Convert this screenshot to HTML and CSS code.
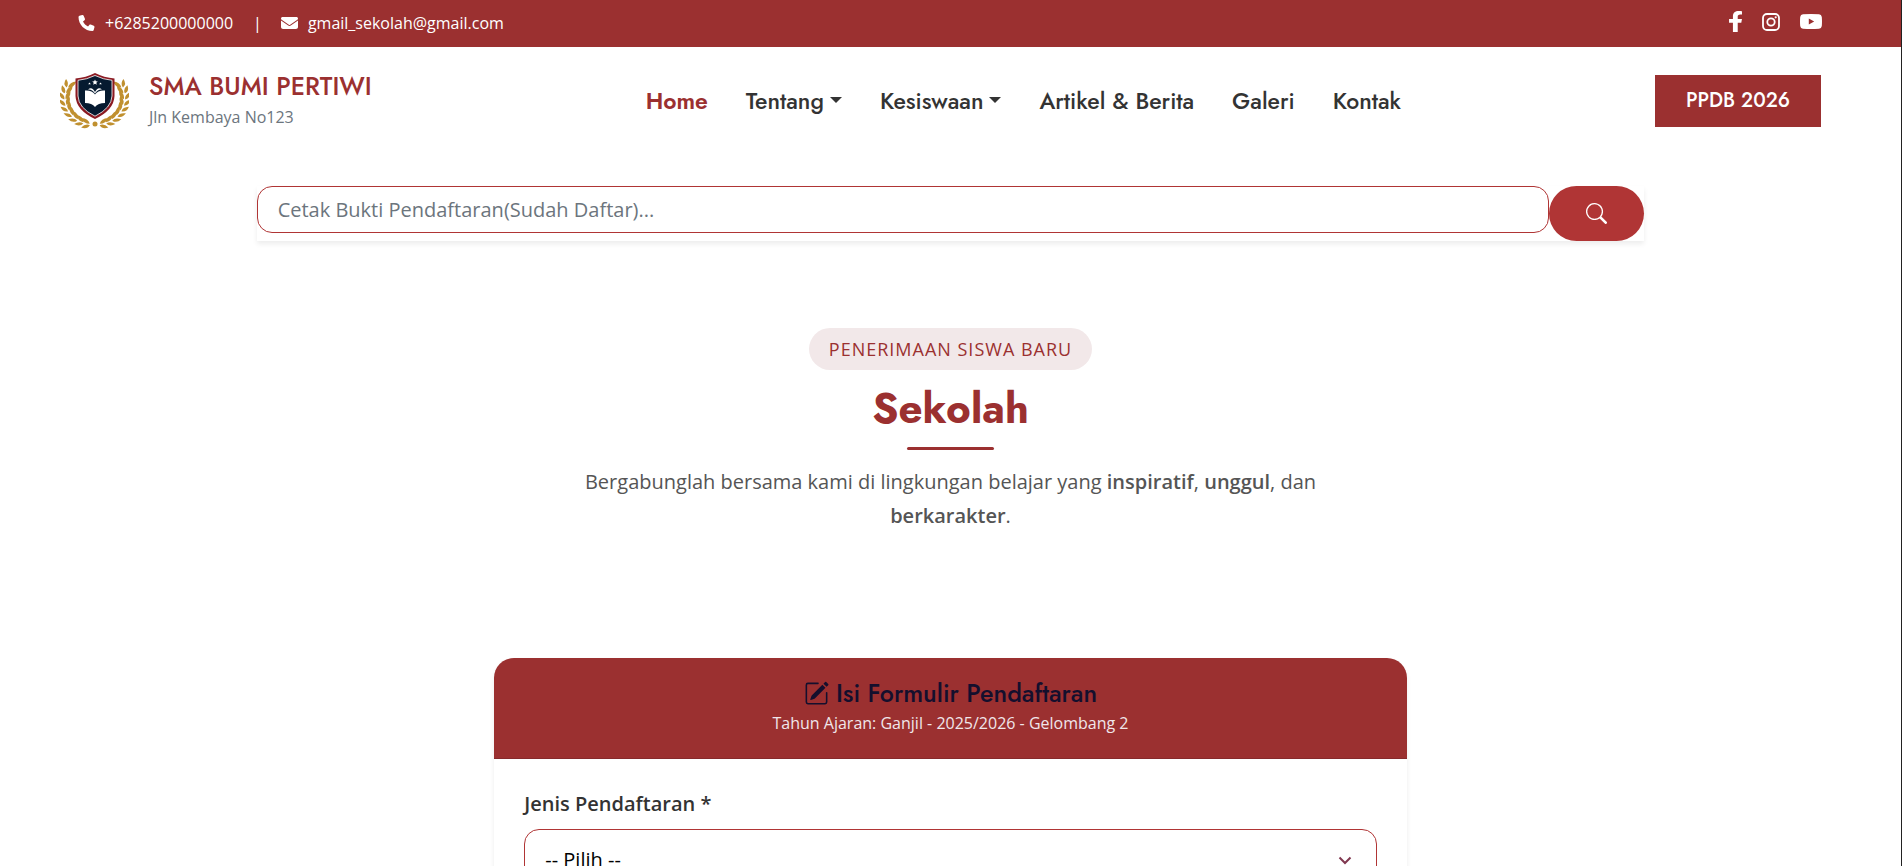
FILE: index.html
```html
<!DOCTYPE html>
<html lang="id">
<head>
<meta charset="UTF-8">
<meta name="viewport" content="width=device-width, initial-scale=1.0">
<title>PPDB - SMA BUMI PERTIWI</title>
<link rel="stylesheet" href="styles.css">
</head>
<body>
  <div class="topbar">
    <div class="contact">
      <svg class="icon" width="17" height="16" viewBox="0 0 512 512"><path d="M164.900 24.600c-7.700-18.600-28-28.500-47.400-23.200l-88 24C12.100 30.200 0 46 0 64c0 247.400 200.600 448 448 448 18 0 33.800-12.100 38.600-29.500l24-88c5.300-19.400-4.600-39.700-23.200-47.400l-96-40c-16.300-6.800-35.200-2.100-46.300 11.600L304.700 368C234.300 334.700 177.300 277.700 144 207.300l49.300-40.300c13.700-11.200 18.400-30 11.600-46.300l-40-96z"/></svg>
      <span>+6285200000000</span>
      <span class="divider">|</span>
      <svg class="icon" width="17" height="16" viewBox="0 0 512 512" preserveAspectRatio="none"><path d="M48 64C21.500 64 0 85.500 0 112c0 15.100 7.100 29.300 19.200 38.400L236.800 313.600c11.400 8.500 27 8.500 38.400 0L492.800 150.400c12.100-9.100 19.200-23.300 19.200-38.400 0-26.500-21.500-48-48-48H48zM0 176v208c0 35.300 28.700 64 64 64h384c35.300 0 64-28.700 64-64V176L294.400 339.200c-22.800 17.100-54 17.100-76.800 0L0 176z"/></svg>
      <span>gmail_sekolah@gmail.com</span>
    </div>
    <div class="social">
      <a href="#" aria-label="Facebook"><svg width="13" height="21" viewBox="22 0 272 512" preserveAspectRatio="none"><path d="M279.140 288l14.220-92.660h-88.910v-60.130c0-25.350 12.420-50.060 52.240-50.060h40.420V6.260S260.430 0 225.360 0c-73.220 0-121.080 44.380-121.080 124.720v70.620H22.890V288h81.390v224h100.170V288z"/></svg></a>
      <a href="#" aria-label="Instagram"><svg width="18" height="18" viewBox="0 0 18 18"><rect x="1" y="1" width="16" height="16" rx="4" fill="none" stroke="#fff" stroke-width="1.800"/><circle cx="9" cy="9" r="3.700" fill="none" stroke="#fff" stroke-width="1.800"/><circle cx="13.700" cy="4.300" r="1.100"/></svg></a>
      <a href="#" aria-label="YouTube"><svg width="22" height="15" viewBox="0 0 22 15"><path fill-rule="evenodd" d="M3 .3Q11-.3 19 .3 21.500.500 21.800 3q.4 4.500 0 9-.3 2.500-2.800 2.700-8 .6-16 0Q.5 14.500.2 12q-.4-4.500 0-9Q.5.500 3 .3zM8.800 4.500v6L14.200 7.500z"/></svg></a>
    </div>
  </div>

  <header class="header">
    <a class="brand" href="#">
      <svg class="logo" width="69" height="57" viewBox="0 0 69 57">
        <defs>
          <path id="leaves" d="M38 52.300q-4.500-.8-7 4.500 6 .3 7-4.500zM37.500 51q-2.500-5-9-3.500 3.500 5 9 3.500z"/>
          <g id="branch" fill="#c0902f">
            <use href="#leaves" transform="rotate(16 34.500 25)"/>
            <use href="#leaves" transform="rotate(29 34.500 25)"/>
            <use href="#leaves" transform="rotate(42 34.500 25)"/>
            <use href="#leaves" transform="rotate(55 34.500 25)"/>
            <use href="#leaves" transform="rotate(68 34.500 25)"/>
            <use href="#leaves" transform="rotate(81 34.500 25)"/>
            <use href="#leaves" transform="rotate(94 34.500 25)"/>
            <use href="#leaves" transform="rotate(107 34.500 25)"/>
            <use href="#leaves" transform="rotate(120 34.500 25)"/>
          </g>
        </defs>
        <use href="#branch" transform="translate(-3.500 0) scale(1.100 1)"/>
        <use href="#branch" transform="translate(73 0) scale(-1.100 1)"/>
        <circle cx="35" cy="51" r="2.500" fill="#c0902f"/>
        <path fill="#8b1a22" d="M35 0q9 4.500 19.500 5.500V23Q54 37 35 46 16 37 15.500 23V5.500Q26 4.500 35 0z"/>
        <path fill="#061a30" stroke="#fff" stroke-width=".8" d="M35 2.500q8 4 17 4.800V23Q51.500 35 35 43.200 18.500 35 18 23V7.300q9-.8 17-4.800z"/>
        <path fill="#fff" d="M25 17.500q7-.5 10 4 3-4.500 10-4V30q-7 0-10 4-3-4-10-4zM28 16.500q4-3.500 7 2.500 3-6 7-2.500-4-.5-7 4-3-4.500-7-4zM35 6.500l.8 1.800 2 .2-1.500 1.300.5 2-1.800-1-1.800 1 .5-2-1.500-1.300 2-.2zM29.500 9.500l1.300 1.700h-2.600zM40.500 9.500l1.300 1.700h-2.600z"/>
      </svg>
      <span class="brand-text">
        <span class="brand-name">SMA BUMI PERTIWI</span>
        <span class="brand-address">Jln Kembaya No123</span>
      </span>
    </a>
    <nav class="nav">
      <a class="active" href="#">Home</a>
      <a class="dropdown" href="#">Tentang</a>
      <a class="dropdown" href="#">Kesiswaan</a>
      <a href="#">Artikel &amp; Berita</a>
      <a href="#">Galeri</a>
      <a href="#">Kontak</a>
    </nav>
    <a class="btn-ppdb" href="#">PPDB 2026</a>
  </header>

  <form class="search">
    <input type="text" placeholder="Cetak Bukti Pendaftaran(Sudah Daftar)..." aria-label="Cetak Bukti Pendaftaran">
    <button type="submit" aria-label="Cari">
      <svg width="21" height="21" viewBox="0 0 16 16"><path d="M11.742 10.344a6.500 6.500 0 1 0-1.397 1.398h-.001q.044.060.098.115l3.850 3.850a1 1 0 0 0 1.415-1.414l-3.850-3.850a1 1 0 0 0-.115-.1zM12 6.500a5.500 5.500 0 1 1-11 0 5.500 5.500 0 0 1 11 0"/></svg>
    </button>
  </form>

  <section class="hero">
    <span class="badge">PENERIMAAN SISWA BARU</span>
    <h1>Sekolah</h1>
    <div class="underline"></div>
    <p>Bergabunglah bersama kami di lingkungan belajar yang <strong>inspiratif</strong>, <strong>unggul</strong>, dan <strong>berkarakter</strong>.</p>
  </section>

  <section class="card">
    <div class="card-header">
      <h2>
        <svg width="25" height="25" viewBox="0 0 16 16"><path d="M15.502 1.940a.5.5 0 0 1 0 .706L14.459 3.690l-2-2L13.502.646a.5.5 0 0 1 .707 0l1.293 1.293zm-1.750 2.456-2-2L4.939 9.210a.5.5 0 0 0-.121.196l-.805 2.414a.25.25 0 0 0 .316.316l2.414-.805a.5.5 0 0 0 .196-.120z"/><path fill-rule="evenodd" d="M1 13.500A1.500 1.500 0 0 0 2.500 15h11a1.500 1.500 0 0 0 1.500-1.500v-6a.5.5 0 0 0-1 0v6a.5.5 0 0 1-.5.5h-11a.5.5 0 0 1-.5-.5v-11a.5.5 0 0 1 .5-.5H9a.5.5 0 0 0 0-1H2.500A1.500 1.500 0 0 0 1 2.500z"/></svg>
        Isi Formulir Pendaftaran
      </h2>
      <p>Tahun Ajaran: Ganjil - 2025/2026 - Gelombang 2</p>
    </div>
    <form class="card-body">
      <label for="jenis">Jenis Pendaftaran *</label>
      <div class="select-wrap">
        <select id="jenis">
          <option>-- Pilih --</option>
        </select>
        <svg class="chevron" width="14" height="9" viewBox="0 0 14 9"><path d="M1.500 1.500L7 7l5.500-5.500" fill="none" stroke="#803850" stroke-width="2"/></svg>
      </div>
    </form>
  </section>
</body>
</html>
```
FILE: styles.css
```css
* {
  box-sizing: border-box;
}
html {
  height: 100%;
  overflow: hidden;
}
body {
  margin: 0;
  height: 100%;
  overflow: hidden;
  border-right: 1px solid #222;
  background-color: #fff;
  font-family: "Open Sans", "Noto Sans", sans-serif;
  font-size: 16px;
  line-height: 24px;
  color: #333;
}
a {
  color: inherit;
  text-decoration: none;
}
svg {
  fill: currentColor;
}
h1, h2, p {
  margin: 0;
}
.topbar {
  display: flex;
  justify-content: space-between;
  align-items: center;
  height: 47px;
  padding: 0 79px 2px 78px;
  background-color: #9b3030;
  color: #fff;
}
.contact, .social {
  display: flex;
  align-items: center;
}
.contact .icon {
  margin-right: 10px;
}
.divider {
  margin: 0 19px 0 20px;
}
.social {
  gap: 20px;
  padding-bottom: 2px;
}
.social a {
  display: flex;
}
.header {
  display: flex;
  justify-content: space-between;
  align-items: center;
  padding: 23px 80px 23px 60px;
}
.brand {
  display: flex;
  align-items: center;
  gap: 20px;
}
.brand-text {
  display: flex;
  flex-direction: column;
}
.brand-name {
  font-family: Jost, Lato, sans-serif;
  font-size: 25px;
  font-weight: 500;
  line-height: 32px;
  color: #9b3030;
}
.brand-address {
  line-height: 30px;
  color: #6c757d;
}
.nav {
  display: flex;
  gap: 38px;
  padding-left: 20px;
  font-family: Jost, Lato, sans-serif;
  font-size: 23px;
  font-weight: 500;
}
.nav .active {
  font-weight: 600;
  color: #9b3030;
}
.dropdown::after {
  content: "";
  display: inline-block;
  margin-left: 6px;
  vertical-align: 6px;
  border-top: 6px solid;
  border-left: 6px solid transparent;
  border-right: 6px solid transparent;
}
.btn-ppdb {
  padding: 14px 31px;
  background-color: #9b3030;
  color: #fff;
  font-family: Jost, Lato, sans-serif;
  font-size: 20px;
  font-weight: 500;
}
.search {
  display: flex;
  align-items: flex-start;
  width: 73%;
  margin: 31px auto 0;
  box-shadow: 0 3px 5px rgba(0,0,0,0.075);
}
.search input {
  flex: 1;
  height: 47px;
  padding: 0 20px;
  border: 1px solid #b03535;
  border-radius: 15px;
  background-color: #fff;
  font-family: inherit;
  font-size: 20px;
}
.search input::placeholder {
  color: #6c757d;
}
.search button {
  display: flex;
  justify-content: center;
  align-items: center;
  width: 95px;
  height: 55px;
  border: none;
  border-radius: 28px;
  background-color: #b03535;
  color: #fff;
}
.hero {
  display: flex;
  flex-direction: column;
  align-items: center;
  padding: 87px 20px 125px;
  text-align: center;
}
.badge {
  padding: 9px 20px;
  border-radius: 21px;
  background-color: #f2e8e9;
  color: #9b3030;
  font-size: 18px;
  font-weight: 500;
  letter-spacing: 1px;
}
.hero h1 {
  margin-top: 12px;
  font-family: Jost, Lato, sans-serif;
  font-size: 42px;
  font-weight: 700;
  line-height: 54px;
  color: #9b3030;
}
.underline {
  width: 87px;
  height: 3px;
  margin-top: 11px;
  border-radius: 2px;
  background-color: #9b3030;
}
.hero p {
  max-width: 760px;
  margin-top: 15px;
  font-size: 20px;
  line-height: 34px;
  color: #555;
}
.hero strong {
  font-weight: 600;
}
.card {
  width: 48%;
  margin: 0 auto;
  border-radius: 20px;
  box-shadow: 0 3px 5px rgba(0,0,0,0.075);
}
.card-header {
  padding: 20px;
  border-bottom: 1px solid #862a2c;
  border-radius: 20px 20px 0 0;
  background-color: #9b3030;
  text-align: center;
  color: #f0e6ea;
}
.card-header h2 {
  display: flex;
  justify-content: center;
  align-items: center;
  gap: 7px;
  font-family: Jost, Lato, sans-serif;
  font-size: 25px;
  font-weight: 500;
  line-height: 30px;
  color: #140f2d;
}
.card-header p {
  line-height: 30px;
}
.card-body {
  padding: 30px;
}
.card-body label {
  display: block;
  margin-bottom: 10px;
  font-size: 20px;
  font-weight: 600;
  line-height: 30px;
}
.select-wrap {
  position: relative;
}
.select-wrap select {
  width: 100%;
  height: 60px;
  padding: 0 20px;
  border: 1px solid #b03535;
  border-radius: 15px;
  background-color: #fff;
  appearance: none;
  font-family: inherit;
  font-size: 20px;
  color: #000;
}
.chevron {
  position: absolute;
  top: 27px;
  right: 25px;
}
```
